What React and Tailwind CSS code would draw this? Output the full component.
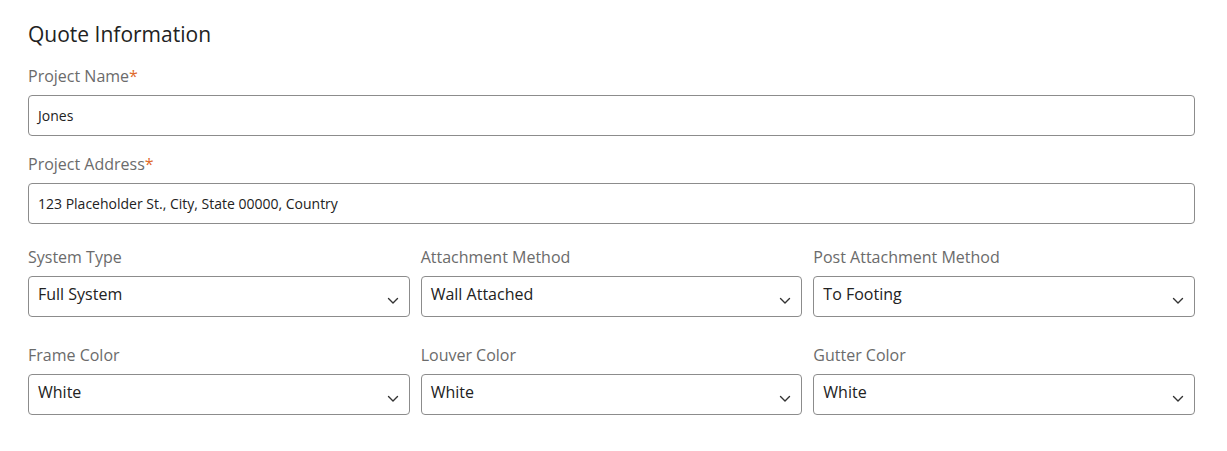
import React from "react";

const font = { fontFamily: '"Segoe UI", "Open Sans", "Noto Sans", sans-serif' };

function Chevron() {
  return (
    <svg width="12" height="8" viewBox="0 0 12 8" fill="none" className="shrink-0">
      <path d="M1.5 1.5 L6 6 L10.5 1.5" stroke="#333" strokeWidth="1.4" strokeLinecap="round" strokeLinejoin="round" />
    </svg>
  );
}

function TextField({ label, value }) {
  return (
    <div className="flex flex-col">
      <div className="text-[16px] leading-[22px] text-[#6b6b6b] mb-[8px]">
        {label}
        <span className="text-[#e06a2c]">*</span>
      </div>
      <div className="h-[41px] border border-[#8c8c8c] rounded-[4px] flex items-center px-[9px] text-[14px] text-[#222]">
        {value}
      </div>
    </div>
  );
}

function SelectField({ label, value }) {
  return (
    <div className="flex flex-col">
      <div className="text-[16px] leading-[22px] text-[#6b6b6b] mb-[8px]">{label}</div>
      <div className="h-[41px] border border-[#8c8c8c] rounded-[4px] flex items-center justify-between pl-[9px] pr-[10px]">
        <span className="text-[16px] text-[#222] -mt-[5px]">{value}</span>
        <span className="mt-[8px]">
          <Chevron />
        </span>
      </div>
    </div>
  );
}

export default function App() {
  return (
    <div className="w-[1227px] h-[451px] bg-white pl-[28px] pr-[32px] pt-[20px]" style={font}>
      <h1 className="text-[21px] leading-[28px] text-[#222] mb-[17px]">Quote Information</h1>
      <div className="flex flex-col gap-[17px]">
        <TextField label="Project Name" value="Jones" />
        <TextField label="Project Address" value="123 Placeholder St., City, State 00000, Country" />
      </div>
      <div className="grid grid-cols-3 gap-x-[11px] gap-y-[27px] mt-[22px]">
        <SelectField label="System Type" value="Full System" />
        <SelectField label="Attachment Method" value="Wall Attached" />
        <SelectField label="Post Attachment Method" value="To Footing" />
        <SelectField label="Frame Color" value="White" />
        <SelectField label="Louver Color" value="White" />
        <SelectField label="Gutter Color" value="White" />
      </div>
    </div>
  );
}
